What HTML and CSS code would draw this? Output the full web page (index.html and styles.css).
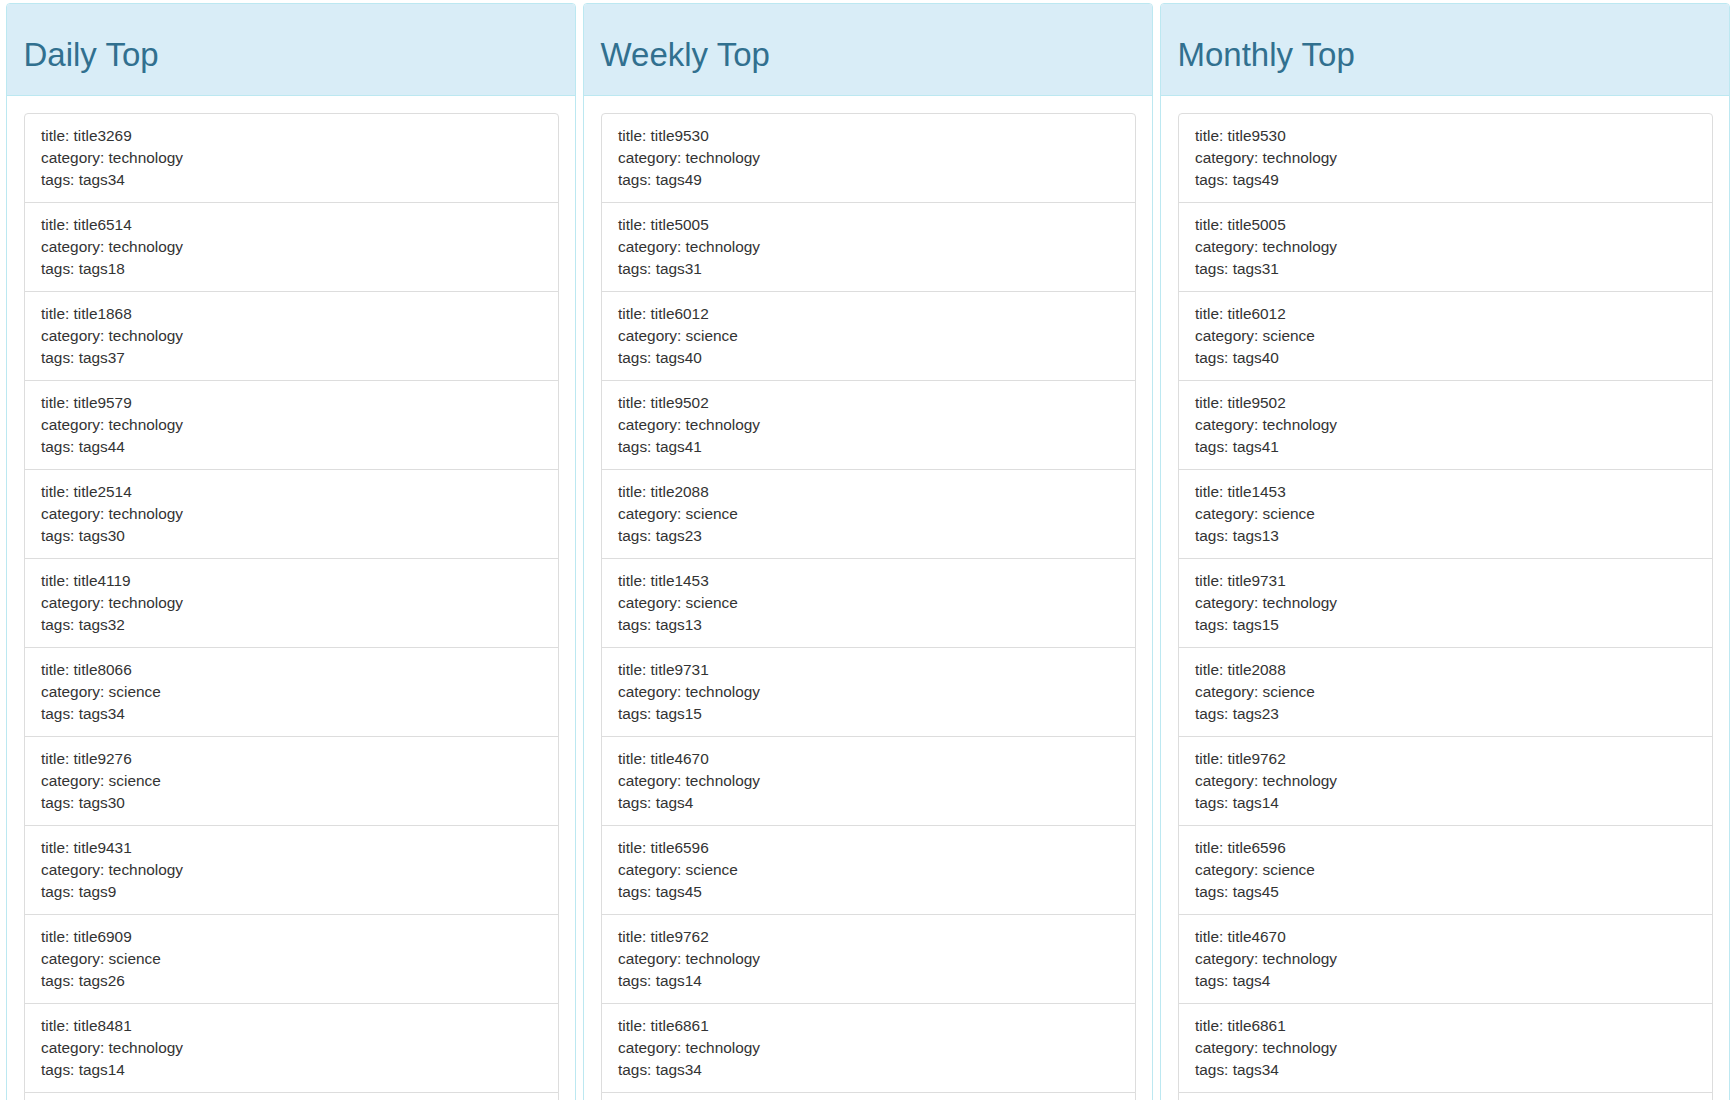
FILE: index.html
```html
<!DOCTYPE html>
<html>
<head>
<meta charset="utf-8">
<title>Top</title>
<link rel="stylesheet" href="styles.css">
</head>
<body>
<div class="board">
  <div class="panel">
    <div class="panel-heading"><h2 class="panel-title">Daily Top</h2></div>
    <div class="panel-body">
      <ul class="list-group">
        <li class="list-group-item">title: title3269<br>category: technology<br>tags: tags34</li>
        <li class="list-group-item">title: title6514<br>category: technology<br>tags: tags18</li>
        <li class="list-group-item">title: title1868<br>category: technology<br>tags: tags37</li>
        <li class="list-group-item">title: title9579<br>category: technology<br>tags: tags44</li>
        <li class="list-group-item">title: title2514<br>category: technology<br>tags: tags30</li>
        <li class="list-group-item">title: title4119<br>category: technology<br>tags: tags32</li>
        <li class="list-group-item">title: title8066<br>category: science<br>tags: tags34</li>
        <li class="list-group-item">title: title9276<br>category: science<br>tags: tags30</li>
        <li class="list-group-item">title: title9431<br>category: technology<br>tags: tags9</li>
        <li class="list-group-item">title: title6909<br>category: science<br>tags: tags26</li>
        <li class="list-group-item">title: title8481<br>category: technology<br>tags: tags14</li>
        <li class="list-group-item">title: title5020<br>category: science<br>tags: tags21</li>
      </ul>
    </div>
  </div>
  <div class="panel">
    <div class="panel-heading"><h2 class="panel-title">Weekly Top</h2></div>
    <div class="panel-body">
      <ul class="list-group">
        <li class="list-group-item">title: title9530<br>category: technology<br>tags: tags49</li>
        <li class="list-group-item">title: title5005<br>category: technology<br>tags: tags31</li>
        <li class="list-group-item">title: title6012<br>category: science<br>tags: tags40</li>
        <li class="list-group-item">title: title9502<br>category: technology<br>tags: tags41</li>
        <li class="list-group-item">title: title2088<br>category: science<br>tags: tags23</li>
        <li class="list-group-item">title: title1453<br>category: science<br>tags: tags13</li>
        <li class="list-group-item">title: title9731<br>category: technology<br>tags: tags15</li>
        <li class="list-group-item">title: title4670<br>category: technology<br>tags: tags4</li>
        <li class="list-group-item">title: title6596<br>category: science<br>tags: tags45</li>
        <li class="list-group-item">title: title9762<br>category: technology<br>tags: tags14</li>
        <li class="list-group-item">title: title6861<br>category: technology<br>tags: tags34</li>
        <li class="list-group-item">title: title3269<br>category: technology<br>tags: tags34</li>
      </ul>
    </div>
  </div>
  <div class="panel">
    <div class="panel-heading"><h2 class="panel-title">Monthly Top</h2></div>
    <div class="panel-body">
      <ul class="list-group">
        <li class="list-group-item">title: title9530<br>category: technology<br>tags: tags49</li>
        <li class="list-group-item">title: title5005<br>category: technology<br>tags: tags31</li>
        <li class="list-group-item">title: title6012<br>category: science<br>tags: tags40</li>
        <li class="list-group-item">title: title9502<br>category: technology<br>tags: tags41</li>
        <li class="list-group-item">title: title1453<br>category: science<br>tags: tags13</li>
        <li class="list-group-item">title: title9731<br>category: technology<br>tags: tags15</li>
        <li class="list-group-item">title: title2088<br>category: science<br>tags: tags23</li>
        <li class="list-group-item">title: title9762<br>category: technology<br>tags: tags14</li>
        <li class="list-group-item">title: title6596<br>category: science<br>tags: tags45</li>
        <li class="list-group-item">title: title4670<br>category: technology<br>tags: tags4</li>
        <li class="list-group-item">title: title6861<br>category: technology<br>tags: tags34</li>
        <li class="list-group-item">title: title3269<br>category: technology<br>tags: tags34</li>
      </ul>
    </div>
  </div>
</div>
</body>
</html>
```
FILE: styles.css
```css
* { box-sizing: border-box; }
html, body { margin: 0; padding: 0; background: #fff; }
body {
  font-family: "Liberation Sans", Arial, Helvetica, sans-serif;
  font-size: 15.4px;
  line-height: 22px;
  color: #333;
}
.board {
  display: grid;
  grid-template-columns: repeat(3, 1fr);
  column-gap: 7px;
  padding: 3px 6px 0 6px;
  align-items: start;
}
.panel {
  background: #fff;
  border: 1px solid #bce8f1;
  border-radius: 4px;
  margin-bottom: 22px;
}
.panel-heading {
  background: #d9edf7;
  color: #31708f;
  padding: 11px 16.5px;
  border-bottom: 1px solid #bce8f1;
  border-radius: 3px 3px 0 0;
}
.panel-title {
  margin: 22px 0 11px;
  font-size: 33px;
  font-weight: 500;
  line-height: 1.1;
}
.panel-body {
  padding: 17px 16.5px;
}
.list-group {
  list-style: none;
  margin: 0;
  padding: 0;
}
.list-group-item {
  display: block;
  padding: 11px 16.5px;
  background: #fff;
  border: 1px solid #ddd;
  margin-bottom: -1px;
}
.list-group-item:first-child {
  border-radius: 4px 4px 0 0;
}
.list-group-item:last-child {
  border-radius: 0 0 4px 4px;
  margin-bottom: 0;
}
```
